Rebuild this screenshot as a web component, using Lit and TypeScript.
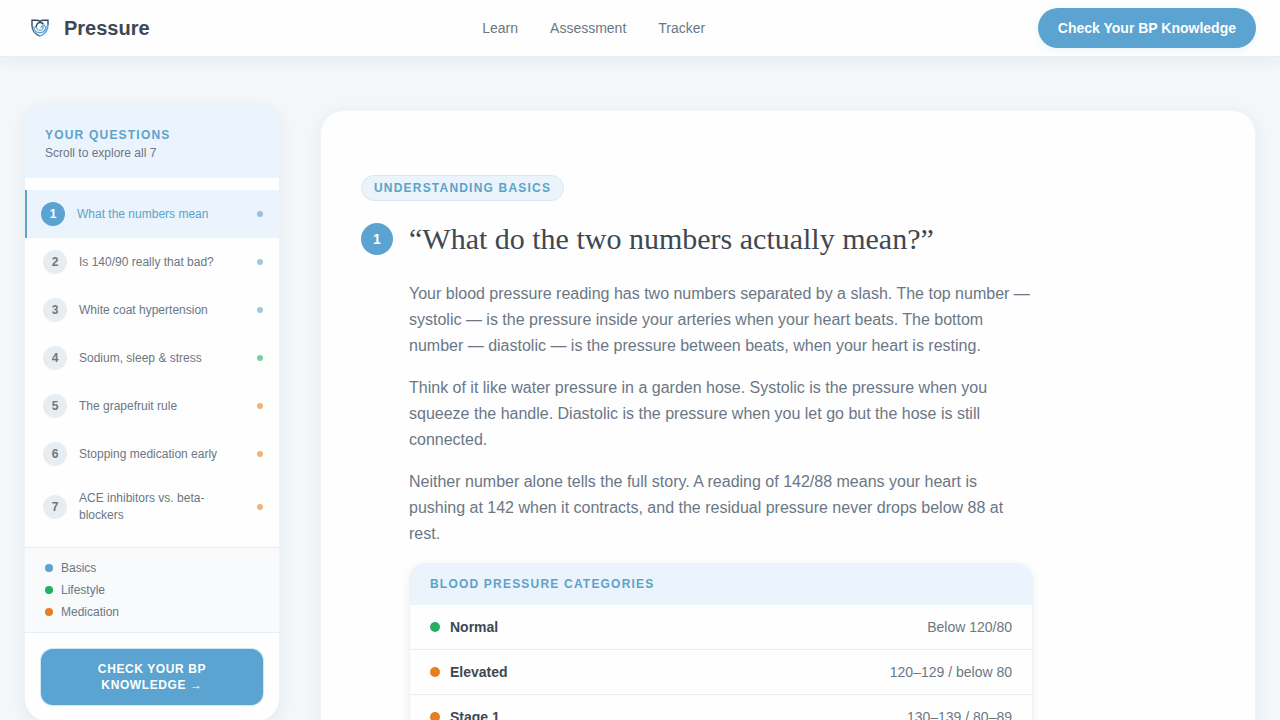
import { LitElement, html, css } from "lit";
import { customElement, state } from "lit/decorators.js";
import { classMap } from "lit/directives/class-map.js";

type Topic = "basics" | "lifestyle" | "medication";

interface Question {
  label: string;
  topic: Topic;
}

const questions: Question[] = [
  { label: "What the numbers mean", topic: "basics" },
  { label: "Is 140/90 really that bad?", topic: "basics" },
  { label: "White coat hypertension", topic: "basics" },
  { label: "Sodium, sleep & stress", topic: "lifestyle" },
  { label: "The grapefruit rule", topic: "medication" },
  { label: "Stopping medication early", topic: "medication" },
  { label: "ACE inhibitors vs. beta-blockers", topic: "medication" },
];

const legend: { label: string; topic: Topic }[] = [
  { label: "Basics", topic: "basics" },
  { label: "Lifestyle", topic: "lifestyle" },
  { label: "Medication", topic: "medication" },
];

const categories = [
  { name: "Normal", range: "Below 120/80", tone: "lifestyle" },
  { name: "Elevated", range: "120–129 / below 80", tone: "medication" },
  { name: "Stage 1", range: "130–139 / 80–89", tone: "medication" },
];

const tones = css`
  * {
    box-sizing: border-box;
  }
  .basics {
    background: #5ba3c8;
  }
  .lifestyle {
    background: #27ae60;
  }
  .medication {
    background: #e67e22;
  }
`;

@customElement("site-header")
export class SiteHeader extends LitElement {
  static styles = css`
    * {
      box-sizing: border-box;
    }
    :host {
      display: block;
      position: sticky;
      top: 0;
      z-index: 2;
    }
    .bar {
      display: flex;
      justify-content: space-between;
      align-items: center;
      height: 57px;
      padding: 0 24px;
      background: #fefefe;
      border-bottom: 1px solid #e8edf2;
      box-shadow: 0 4px 16px rgba(44, 62, 80, 0.06);
    }
    .brand {
      display: flex;
      align-items: center;
      gap: 8px;
      color: #3d4852;
      font-size: 20px;
      font-weight: 700;
      line-height: 32px;
      text-decoration: none;
    }
    .logo {
      width: 32px;
      height: 32px;
    }
    .links {
      display: flex;
      gap: 32px;
    }
    .link {
      color: #6b7785;
      font-size: 14px;
      line-height: 20px;
      text-decoration: none;
    }
    .cta {
      height: 40px;
      padding: 0 20px;
      border: 0;
      border-radius: 20px;
      background: #5ba3d0;
      color: #fefefe;
      font: 700 14px/20px "Liberation Sans", Arial, sans-serif;
      box-shadow: 0 2px 8px rgba(91, 163, 208, 0.12);
      cursor: pointer;
    }
  `;

  render() {
    return html`
      <header class="bar">
        <a class="brand" href="#top">
          <svg class="logo" viewBox="0 0 32 32" fill="none" aria-hidden="true">
            <path d="M8 14V8.200h4.500c1.600 0 2.700.4 3.500 1.200.8-.8 1.900-1.200 3.500-1.200H24V13" stroke="#34495e" stroke-width="1.400" />
            <path d="M8 13.500c0 5.500 2.800 8.600 8 10.600" stroke="#4a6a85" stroke-width="1.400" />
            <path d="M24 12.500c0 6-2.800 9.600-8 11.600" stroke="#5ba3d0" stroke-width="1.400" />
            <path d="M12.200 15.800c-.4-3.200 1.600-5.300 4-5.300 1.600 0 2.700.6 3.600 1.800" stroke="#34495e" stroke-width="1.400" />
            <path d="M9.800 14.500c.2 3.800 2.700 6.300 6 6.300 3.600 0 6.200-2.700 6.400-7.300" stroke="#5ba3d0" stroke-width="1.400" />
            <path d="M12.500 15.500c.4 1.900 1.600 2.900 3.300 2.900 2 0 3.300-1.300 3.700-3.700l-2.300.4 2.300-2.800 1.600 2.200" stroke="#6bb3de" stroke-width="1.200" />
          </svg>
          <span>Pressure</span>
        </a>
        <nav class="links" aria-label="Primary">
          <a class="link" href="#learn">Learn</a>
          <a class="link" href="#assessment">Assessment</a>
          <a class="link" href="#tracker">Tracker</a>
        </nav>
        <button class="cta" type="button">Check Your BP Knowledge</button>
      </header>
    `;
  }
}

@customElement("question-nav")
export class QuestionNav extends LitElement {
  @state() private active = 0;

  static styles = [
    tones,
    css`
      :host {
        display: block;
      }
      .panel {
        overflow: hidden;
        border: 1px solid #edf2f7;
        border-radius: 24px;
        background: #fefefe;
        box-shadow: 0 4px 16px rgba(44, 62, 80, 0.08);
        font-size: 12px;
        line-height: 18px;
        color: #6b7785;
      }
      .head {
        padding: 20px 20px 16px;
        background: #ebf3fc;
      }
      .title {
        margin: 0;
        color: #5ba3c8;
        font-size: 12px;
        font-weight: 700;
        letter-spacing: 1.2px;
        text-transform: uppercase;
      }
      .sub {
        margin: 0;
      }
      .list {
        margin: 0;
        padding: 12px 0 11px;
        list-style: none;
      }
      .item {
        display: flex;
        align-items: center;
        gap: 12px;
        width: 100%;
        padding: 12px 16px 12px 18px;
        border: 0;
        background: none;
        color: inherit;
        font: 400 12px/17px "Liberation Sans", Arial, sans-serif;
        text-align: left;
        cursor: pointer;
      }
      .item.active {
        padding-left: 14px;
        border-left: 2px solid #5ba3c8;
        background: #ebf3fc;
        color: #5ba3c8;
      }
      .num {
        display: grid;
        place-items: center;
        flex: none;
        width: 24px;
        height: 24px;
        border-radius: 50%;
        background: #e8edf2;
        font-weight: 700;
      }
      .active .num {
        background: #5ba3d0;
        color: #fefefe;
      }
      .label {
        flex: 1;
        padding-right: 24px;
      }
      .mark {
        flex: none;
        width: 6px;
        height: 6px;
        border-radius: 50%;
        opacity: 0.6;
      }
      .legend {
        display: grid;
        gap: 4px;
        margin: 0;
        padding: 11px 20px;
        border-top: 1px solid #e8edf2;
        background: #f8fafc;
        list-style: none;
      }
      .entry {
        display: flex;
        align-items: center;
        gap: 8px;
      }
      .dot {
        width: 8px;
        height: 8px;
        border-radius: 50%;
      }
      .foot {
        padding: 16px;
        border-top: 1px solid #e8edf2;
      }
      .cta {
        width: 100%;
        padding: 12px 32px;
        border: 0;
        border-radius: 12px;
        background: #5ba3d0;
        color: #fefefe;
        font: 700 12px/16px "Liberation Sans", Arial, sans-serif;
        letter-spacing: 0.6px;
        text-transform: uppercase;
        box-shadow: 0 0 0 1px #d3e5f2;
        cursor: pointer;
      }
    `,
  ];

  render() {
    return html`
      <aside class="panel">
        <div class="head">
          <h2 class="title">Your questions</h2>
          <p class="sub">Scroll to explore all 7</p>
        </div>
        <ol class="list">
          ${questions.map(
            (q, i) => html`<li>
              <button
                type="button"
                class=${classMap({ item: true, active: i === this.active })}
                @click=${() => (this.active = i)}
              >
                <span class="num">${i + 1}</span>
                <span class="label">${q.label}</span>
                <span class="mark ${q.topic}"></span>
              </button>
            </li>`
          )}
        </ol>
        <ul class="legend">
          ${legend.map(
            (l) => html`<li class="entry"><span class="dot ${l.topic}"></span>${l.label}</li>`
          )}
        </ul>
        <div class="foot">
          <button class="cta" type="button">Check your BP knowledge →</button>
        </div>
      </aside>
    `;
  }
}

@customElement("question-article")
export class QuestionArticle extends LitElement {
  static styles = [
    tones,
    css`
      :host {
        display: block;
      }
      .card {
        padding: 64px 40px;
        border: 1px solid #f1f5f8;
        border-radius: 24px;
        background: #fefefe;
        box-shadow: 0 4px 16px rgba(44, 62, 80, 0.08);
      }
      .tag {
        display: inline-block;
        padding: 3px 12px;
        border: 1px solid #dce8f3;
        border-radius: 13px;
        background: #ebf3fc;
        color: #5ba3c8;
        font-size: 12px;
        font-weight: 700;
        line-height: 18px;
        letter-spacing: 1.2px;
        text-transform: uppercase;
      }
      .heading {
        display: flex;
        align-items: center;
        gap: 16px;
        margin-top: 20px;
      }
      .num {
        display: grid;
        place-items: center;
        flex: none;
        width: 32px;
        height: 32px;
        border-radius: 50%;
        background: #5ba3d0;
        color: #fefefe;
        font-size: 14px;
        font-weight: 700;
      }
      .title {
        margin: 0;
        color: #3d4852;
        font-family: "Liberation Serif", "Times New Roman", serif;
        font-size: 30px;
        font-weight: 400;
        line-height: 36px;
      }
      .body {
        max-width: 672px;
        margin-top: 24px;
        padding-left: 48px;
      }
      .text {
        margin: 0 0 16px;
        color: #6b7785;
        font-size: 16px;
        line-height: 26px;
      }
      .frame {
        overflow: hidden;
        border: 1px solid #edf2f7;
        border-radius: 16px;
        box-shadow: 0 2px 8px rgba(44, 62, 80, 0.08);
      }
      .table {
        width: 100%;
        border-collapse: collapse;
        font-size: 14px;
        line-height: 20px;
      }
      .caption {
        padding: 11px 20px 12px;
        background: #ebf3fc;
        color: #5ba3c8;
        font-size: 12px;
        line-height: 18px;
        letter-spacing: 1.2px;
        text-align: left;
        text-transform: uppercase;
      }
      .row {
        border-bottom: 1px solid #e8edf2;
      }
      .name,
      .range {
        padding: 12px 20px;
      }
      .name {
        color: #3d4852;
        text-align: left;
      }
      .range {
        color: #6b7785;
        text-align: right;
      }
      .label {
        display: flex;
        align-items: center;
        gap: 10px;
      }
      .dot {
        width: 10px;
        height: 10px;
        border-radius: 50%;
      }
    `,
  ];

  render() {
    return html`
      <article class="card">
        <span class="tag">Understanding basics</span>
        <div class="heading">
          <span class="num">1</span>
          <h1 class="title">“What do the two numbers actually mean?”</h1>
        </div>
        <div class="body">
          <p class="text">
            Your blood pressure reading has two numbers separated by a slash. The top number —
            systolic — is the pressure inside your arteries when your heart beats. The bottom
            number — diastolic — is the pressure between beats, when your heart is resting.
          </p>
          <p class="text">
            Think of it like water pressure in a garden hose. Systolic is the pressure when you
            squeeze the handle. Diastolic is the pressure when you let go but the hose is still
            connected.
          </p>
          <p class="text">
            Neither number alone tells the full story. A reading of 142/88 means your heart is
            pushing at 142 when it contracts, and the residual pressure never drops below 88 at
            rest.
          </p>
          <div class="frame">
            <table class="table">
              <thead>
                <tr>
                  <th class="caption" colspan="2">Blood pressure categories</th>
                </tr>
              </thead>
              <tbody>
                ${categories.map(
                  (c) => html`<tr class="row">
                    <th class="name" scope="row">
                      <span class="label"><span class="dot ${c.tone}"></span>${c.name}</span>
                    </th>
                    <td class="range">${c.range}</td>
                  </tr>`
                )}
              </tbody>
            </table>
          </div>
        </div>
      </article>
    `;
  }
}

@customElement("app-root")
export class AppRoot extends LitElement {
  static styles = css`
    :host {
      display: block;
      min-height: 100vh;
      background: #f3f7fa;
      font-family: "Liberation Sans", Arial, sans-serif;
    }
    .layout {
      display: grid;
      grid-template-columns: 256px minmax(0, 1fr);
      align-items: start;
      gap: 40px;
      padding: 48px 24px 64px;
    }
    .content {
      padding-top: 5px;
    }
  `;

  render() {
    return html`
      <site-header></site-header>
      <main class="layout">
        <question-nav></question-nav>
        <div class="content">
          <question-article></question-article>
        </div>
      </main>
    `;
  }
}
